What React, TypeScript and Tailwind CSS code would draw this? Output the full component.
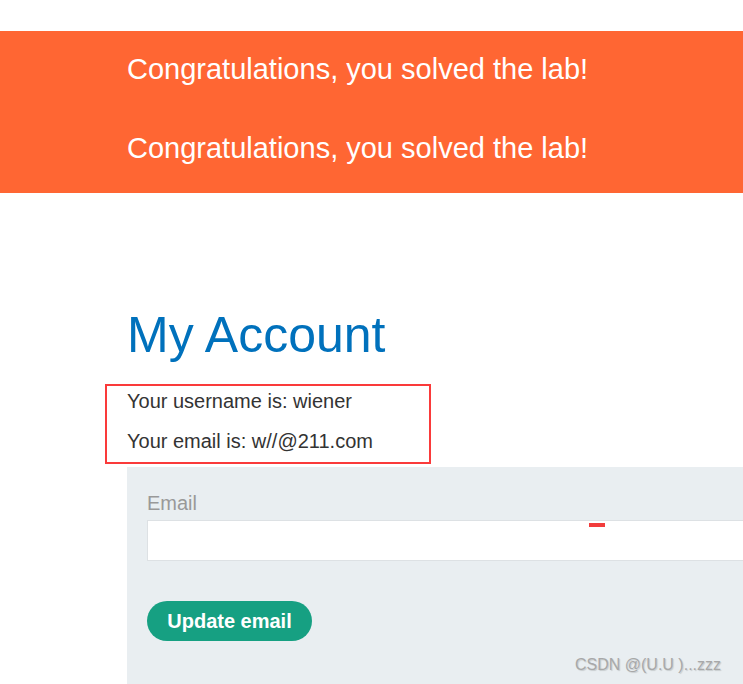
export default function App() {
  return (
    <div className="relative w-[743px] h-[684px] overflow-hidden bg-white font-['Liberation_Sans',Arial,sans-serif]">
      <div className="h-[31px]" />
      {/* solved banner */}
      <section className="bg-[#ff6633] h-[162px] pl-[127px] flex flex-col">
        <p className="text-white text-[29px] leading-[34px] mt-[21px]">Congratulations, you solved the lab!</p>
        <p className="text-white text-[29px] leading-[34px] mt-[45px]">Congratulations, you solved the lab!</p>
      </section>

      <div className="pl-[127px]">
        <h1 className="text-[#0071bc] text-[50px] leading-[56px] mt-[114px]">My Account</h1>
        <div className="relative mt-[26px] flex flex-col text-[#333] text-[20px] leading-[24px]">
          <div className="absolute left-[-22px] top-[-5px] w-[326px] h-[80px] border-2 border-[#fa3a3a]" />
          <p>Your username is: wiener</p>
          <p className="mt-[16px]">Your email is: w//@211.com</p>
        </div>

        {/* form panel */}
        <div className="mt-[14px] bg-[#e9eef1] h-[300px] pl-[20px] pt-[24px] flex flex-col">
          <label className="text-[#999] text-[20px] leading-[24px]">Email</label>
          <div className="relative mt-[5px] h-[41px] bg-white border border-[#dde1e4] border-r-0">
            <div className="absolute left-[441px] top-[2px] w-[16px] h-[4px] bg-[#f23c3c]" />
          </div>
          <button className="mt-[40px] w-[165px] h-[40px] rounded-full bg-[#16a082] text-white font-bold text-[20px]">
            Update email
          </button>
        </div>
      </div>

      <span className="absolute left-[575px] top-[655px] text-[16px] leading-[20px] text-[#a8a8a8] [text-shadow:1px_1px_1px_rgba(0,0,0,0.15)]">
        CSDN @(U.U )...zzz
      </span>
    </div>
  )
}
